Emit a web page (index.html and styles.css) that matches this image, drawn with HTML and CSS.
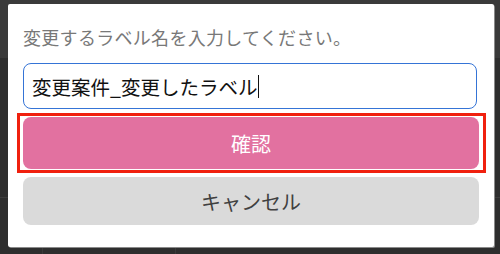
FILE: index.html
```html
<!DOCTYPE html>
<html lang="ja">
<head>
<meta charset="utf-8">
<link rel="stylesheet" href="styles.css">
</head>
<body>
<div class="backdrop">
  <div class="dialog">
    <div class="label">変更するラベル名を入力してください。</div>
    <div class="field"><span class="value">変更案件_変更したラベル</span><span class="caret"></span></div>
    <div class="btn btn-ok">確認</div>
    <div class="btn btn-cancel">キャンセル</div>
  </div>
</div>
</body>
</html>
```

FILE: styles.css
```css
html, body {
  margin: 0;
  padding: 0;
}
body {
  width: 500px;
  height: 254px;
  overflow: hidden;
  font-family: "Noto Sans CJK JP", "Noto Sans", sans-serif;
  background: #2e2e2e;
}
.backdrop {
  height: 254px;
  box-sizing: border-box;
  padding: 4px 6px 7px 8px;
  background:
    linear-gradient(#3a3a3a, #3a3a3a) 0 0 / 100% 58px no-repeat,
    linear-gradient(#3d3d3d, #3d3d3d) 0 197px / 100% 1px no-repeat,
    linear-gradient(#3a3a3a, #3a3a3a) 42px 197px / 1px 60px no-repeat,
    linear-gradient(#3a3a3a, #3a3a3a) 175px 197px / 1px 60px no-repeat,
    #2e2e2e;
}
.dialog {
  background: #fff;
  border-radius: 2px;
  box-shadow: 1px 1px 0 #8a8a8a;
  height: 243px;
  box-sizing: border-box;
  padding: 20px 15px 22px 15px;
  display: flex;
  flex-direction: column;
}
.label {
  font-size: 18px;
  line-height: 26px;
  letter-spacing: 0.3px;
  color: #787878;
  white-space: nowrap;
}
.field {
  margin-top: 13px;
  margin-right: 2px;
  height: 46px;
  box-sizing: border-box;
  border: 1.5px solid #3574d6;
  border-radius: 8px;
  padding: 0 8px;
  display: flex;
  align-items: center;
  font-size: 19.5px;
  color: #111;
  white-space: nowrap;
}
.caret {
  display: inline-block;
  width: 1px;
  height: 23px;
  background: #111;
  margin-left: 1px;
}
.btn {
  border-radius: 8px;
  display: flex;
  align-items: center;
  justify-content: center;
  font-size: 20px;
  white-space: nowrap;
}
.btn-ok {
  position: relative;
  margin-top: 8px;
  height: 52px;
  background: #e271a0;
  color: #fff;
}
.btn-ok::after {
  content: "";
  position: absolute;
  top: -4px;
  bottom: -4px;
  left: -6px;
  right: -7px;
  border: 3px solid #f0200e;
  pointer-events: none;
}
.btn-cancel {
  margin-top: 8px;
  height: 48px;
  background: #dadada;
  color: #404040;
}
```
